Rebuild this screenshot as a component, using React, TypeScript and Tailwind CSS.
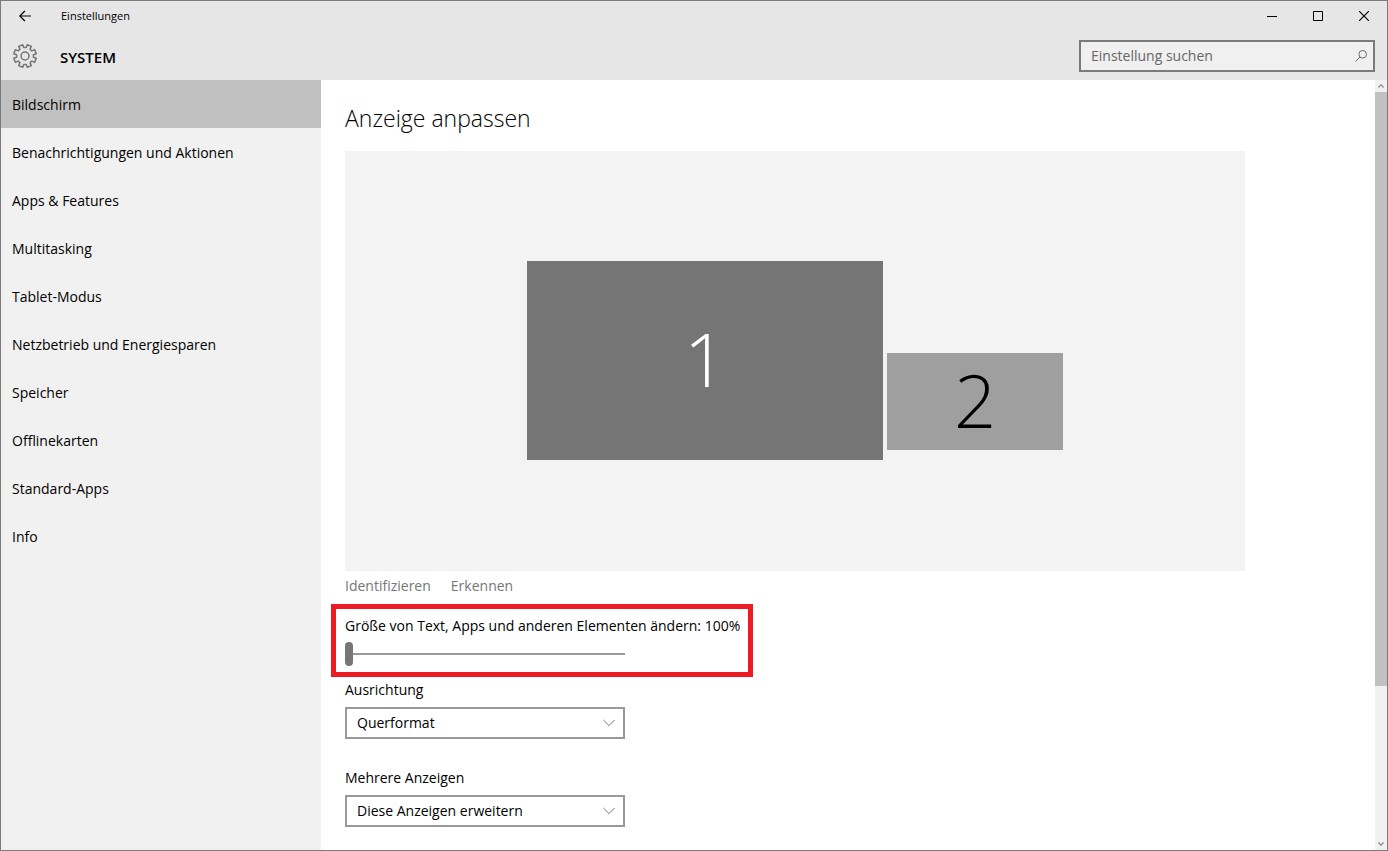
import React from "react";

const sections = [
  "Bildschirm",
  "Benachrichtigungen und Aktionen",
  "Apps & Features",
  "Multitasking",
  "Tablet-Modus",
  "Netzbetrieb und Energiesparen",
  "Speicher",
  "Offlinekarten",
  "Standard-Apps",
  "Info",
];

// Eight teeth, with a gap facing straight up.
function gearPath() {
  const points: string[] = [];
  const add = (radius: number, degrees: number) => {
    const a = (degrees * Math.PI) / 180;
    points.push(`${(12 + radius * Math.sin(a)).toFixed(2)} ${(12 - radius * Math.cos(a)).toFixed(2)}`);
  };
  for (let i = 0; i < 8; i++) {
    const mid = 22.5 + i * 45;
    add(8.5, mid - 14);
    add(11.5, mid - 11);
    add(11.5, mid + 11);
    add(8.5, mid + 14);
  }
  return `M${points.join("L")}Z`;
}

function GearIcon() {
  return (
    <svg viewBox="0 0 24 24" className="size-6 overflow-visible text-[#767676]" fill="none" stroke="currentColor" strokeWidth="1.5" strokeLinejoin="round" aria-hidden="true">
      <path d={gearPath()} />
      <circle cx="12" cy="12" r="4" />
    </svg>
  );
}

function SelectField({ id, label, options }: { id: string; label: string; options: string[] }) {
  return (
    <div className="flex w-[280px] flex-col gap-[7px]">
      <label htmlFor={id} className="leading-5">
        {label}
      </label>
      <div className="relative">
        <select id={id} className="block h-8 w-full appearance-none border-2 border-[#999999] bg-white pr-8 pl-[10px] leading-5 outline-none">
          {options.map((o) => (
            <option key={o}>{o}</option>
          ))}
        </select>
        <svg viewBox="0 0 12 8" className="pointer-events-none absolute top-3 right-[10px] h-2 w-3" fill="none" stroke="#767676" aria-hidden="true">
          <path d="M.4 1 6 6.6 11.6 1" />
        </svg>
      </div>
    </div>
  );
}

export default function App() {
  return (
    <div className="flex h-screen flex-col overflow-hidden border border-[#7b7b7b] bg-white font-['Open_Sans','Noto_Sans',sans-serif] text-sm text-black">
      <header className="shrink-0 bg-[#e6e6e6]">
        <div className="flex h-[30px] items-center">
          <button aria-label="Zurück" className="flex h-full w-12 items-center justify-center">
            <svg viewBox="0 0 12 12" className="size-3" fill="none" stroke="black" strokeWidth="1.2" aria-hidden="true">
              <path d="M12 6H.8M5.8 1 .8 6l5 5" />
            </svg>
          </button>
          <span className="ml-3 text-[11px] leading-4">Einstellungen</span>
          <div className="ml-auto flex h-full">
            <button aria-label="Minimieren" className="flex w-[46px] items-center justify-center">
              <svg viewBox="0 0 10 10" className="size-[10px]" stroke="black" aria-hidden="true">
                <path d="M0 5.5h10" />
              </svg>
            </button>
            <button aria-label="Maximieren" className="flex w-[46px] items-center justify-center">
              <svg viewBox="0 0 10 10" className="size-[10px]" fill="none" stroke="black" aria-hidden="true">
                <path d="M.5.5h9v9h-9z" />
              </svg>
            </button>
            <button aria-label="Schließen" className="flex w-[46px] items-center justify-center">
              <svg viewBox="0 0 10 10" className="size-[10px]" stroke="black" strokeWidth="1.1" aria-hidden="true">
                <path d="m0 0 10 10M10 0 0 10" />
              </svg>
            </button>
          </div>
        </div>
        <div className="flex h-[49px] items-center pr-3">
          <div className="flex w-12 justify-center">
            <GearIcon />
          </div>
          <h1 className="ml-[11px] pt-[2px] text-[15px] leading-5 font-semibold">SYSTEM</h1>
          <div className="relative ml-auto w-[296px]">
            <input
              type="text"
              aria-label="Einstellung suchen"
              placeholder="Einstellung suchen"
              className="block h-8 w-full border-2 border-[#7a7a7a] bg-[#f0f0f0] pr-8 pl-[10px] leading-5 outline-none placeholder:text-[#666666]"
            />
            <svg viewBox="0 0 12 12" className="pointer-events-none absolute top-[10px] right-2 size-3" fill="none" stroke="#6a6a6a" aria-hidden="true">
              <circle cx="7.7" cy="4.3" r="3.8" />
              <path d="M5 7 .4 11.6" />
            </svg>
          </div>
        </div>
      </header>

      <div className="flex min-h-0 flex-1">
        <nav className="w-80 shrink-0 bg-[#f1f1f1]">
          {sections.map((s, i) => (
            <a
              key={s}
              href="#"
              aria-current={i === 0 ? "page" : undefined}
              className={i === 0 ? "flex h-12 items-center bg-[#c0c0c0] px-[11px] pt-[2px]" : "flex h-12 items-center px-[11px] pt-[2px]"}
            >
              {s}
            </a>
          ))}
        </nav>

        <main className="min-w-0 flex-1 overflow-hidden px-6 pt-6">
          <h2 className="text-[23px] leading-7 font-light">Anzeige anpassen</h2>
          <div className="relative mt-[19px] h-[420px] max-w-[900px] bg-[#f3f3f3]">
            <button className="absolute top-[110px] left-[182px] flex h-[199px] w-[356px] items-center justify-center bg-[#757575] pb-1 text-[74px] font-light text-white">
              1
            </button>
            <button className="absolute top-[202px] left-[542px] flex h-[97px] w-44 items-center justify-center bg-[#9f9f9f] pb-1 text-[74px] font-light">
              2
            </button>
          </div>
          <div className="mt-[5px] flex gap-5 leading-5 text-[#767676]">
            <a href="#">Identifizieren</a>
            <a href="#">Erkennen</a>
          </div>

          <div className="mt-2 -ml-[14px] flex w-[422px] flex-col border-5 border-[#ed1c24] px-[9px] pt-[7px] pb-[6px]">
            <label htmlFor="scale" className="leading-5 whitespace-nowrap">
              Größe von Text, Apps und anderen Elementen ändern: 100%
            </label>
            <input
              id="scale"
              type="range"
              min="100"
              max="175"
              step="25"
              defaultValue="100"
              className="mt-[6px] h-6 w-[280px] appearance-none bg-transparent [&::-webkit-slider-runnable-track]:h-[2px] [&::-webkit-slider-runnable-track]:bg-[#999999] [&::-webkit-slider-thumb]:-mt-[11px] [&::-webkit-slider-thumb]:h-6 [&::-webkit-slider-thumb]:w-2 [&::-webkit-slider-thumb]:appearance-none [&::-webkit-slider-thumb]:rounded-full [&::-webkit-slider-thumb]:bg-[#767676]"
            />
          </div>

          <div className="mt-[3px] flex flex-col gap-[29px]">
            <SelectField id="orientation" label="Ausrichtung" options={["Querformat", "Hochformat"]} />
            <SelectField id="displays" label="Mehrere Anzeigen" options={["Diese Anzeigen erweitern", "Diese Anzeigen duplizieren"]} />
          </div>
        </main>

        <div className="flex w-3 shrink-0 flex-col bg-[#f1f1f1]">
          <button aria-label="Nach oben" className="flex h-3 items-center justify-center">
            <svg viewBox="0 0 6 4" className="h-1 w-[6px]" fill="none" stroke="#8a8a8a" strokeWidth="1.3" aria-hidden="true">
              <path d="M.4 3.5 3 .9l2.6 2.6" />
            </svg>
          </button>
          <div className="grow-39 bg-[#c1c1c1]" />
          <div className="grow-10" />
          <button aria-label="Nach unten" className="flex h-3 items-center justify-center">
            <svg viewBox="0 0 6 4" className="h-1 w-[6px]" fill="none" stroke="#8a8a8a" strokeWidth="1.3" aria-hidden="true">
              <path d="M.4.5 3 3.1 5.6.5" />
            </svg>
          </button>
        </div>
      </div>
    </div>
  );
}
